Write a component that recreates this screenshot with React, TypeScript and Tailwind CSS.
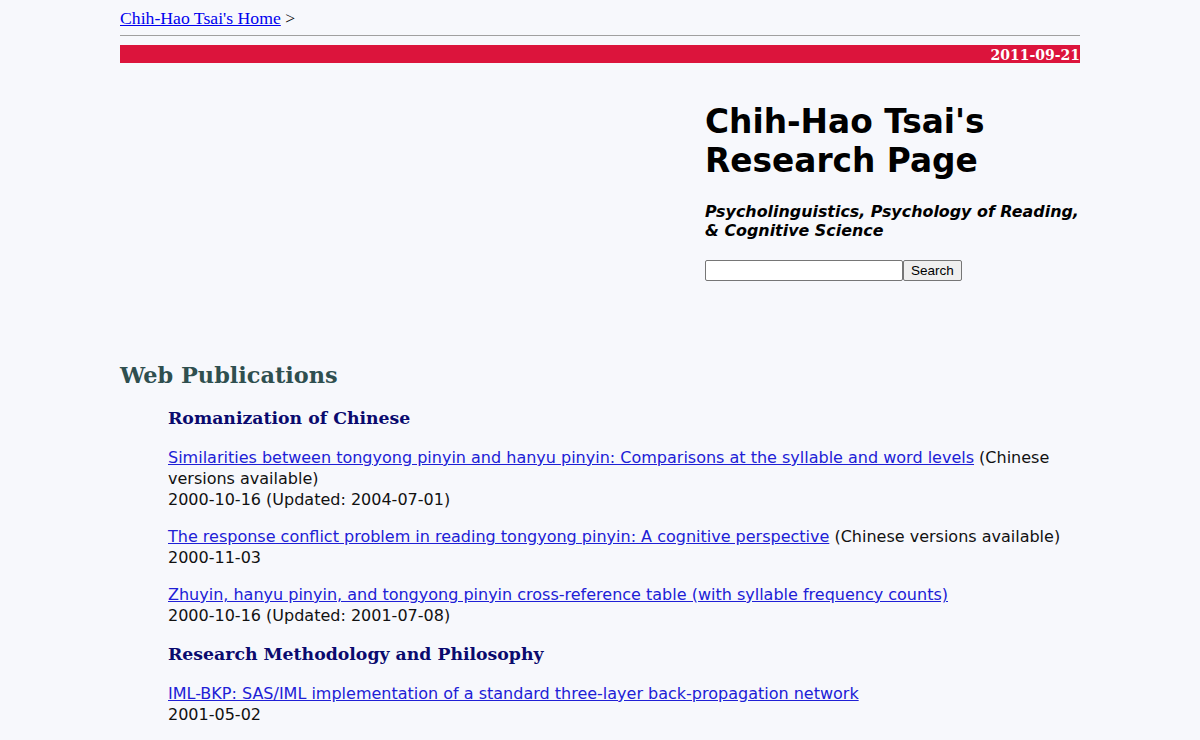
import React from 'react';

const verdana = "font-['Verdana','DejaVu_Sans',sans-serif]";

type Pub = { title: string; note?: string; date: string };

const romanization: Pub[] = [
  {
    title: 'Similarities between tongyong pinyin and hanyu pinyin: Comparisons at the syllable and word levels',
    note: '(Chinese versions available)',
    date: '2000-10-16 (Updated: 2004-07-01)',
  },
  {
    title: 'The response conflict problem in reading tongyong pinyin: A cognitive perspective',
    note: '(Chinese versions available)',
    date: '2000-11-03',
  },
  {
    title: 'Zhuyin, hanyu pinyin, and tongyong pinyin cross-reference table (with syllable frequency counts)',
    date: '2000-10-16 (Updated: 2001-07-08)',
  },
];

const methodology: Pub[] = [
  {
    title: 'IML-BKP: SAS/IML implementation of a standard three-layer back-propagation network',
    date: '2001-05-02',
  },
];

function PubItem({ pub }: { pub: Pub }) {
  return (
    <p className="mb-4 text-[16px] leading-[21px] text-[#111]">
      <a href="#" className="text-[#2020d6] underline">
        {pub.title}
      </a>
      {pub.note ? ' ' + pub.note : ''}
      <br />
      {pub.date}
    </p>
  );
}

function Section({ title, pubs }: { title: string; pubs: Pub[] }) {
  return (
    <div>
      <h3 className="mb-[17px] font-['Georgia','DejaVu_Serif',serif] text-[17.3px] font-bold leading-[24px] text-[#0a0a6e]">
        {title}
      </h3>
      {pubs.map((p) => (
        <PubItem key={p.title} pub={p} />
      ))}
    </div>
  );
}

export default function App() {
  return (
    <div className="min-h-[740px] bg-[#f7f8fc]">
      <div className={`mx-auto w-[960px] pt-[8px] ${verdana}`}>
        {/* breadcrumb */}
        <div className="font-['Liberation_Serif',serif] text-[17.7px] leading-[20px] text-black">
          <a href="#" className="text-[#0000ee] underline">
            Chih-Hao Tsai's Home
          </a>{' '}
          &gt;
        </div>
        <div className="mt-[7px] h-px bg-[#a0a0a0]" />
        <div className="mt-[9px] flex h-[18px] items-center justify-end bg-[#dc143c] pt-[3px] font-['Georgia','DejaVu_Serif',serif] text-[14px] font-bold text-white">
          2011-09-21
        </div>

        {/* title block */}
        <div className="flex">
          <div className="w-[585px]" />
          <div className="flex-1 pt-[40px]">
            <h1 className="text-[32.8px] font-bold leading-[39px] text-black">
              Chih-Hao Tsai's
              <br />
              Research Page
            </h1>
            <p className="mt-[21px] whitespace-nowrap text-[15.9px] font-bold italic leading-[19px] text-black">
              Psycholinguistics, Psychology of Reading,
              <br />& Cognitive Science
            </p>
            <div className="mt-[20px] flex items-center">
              <input
                type="text"
                className="h-[21px] w-[198px] rounded-[2px] border border-[#767676] bg-white"
              />
              <button className="h-[21px] rounded-[2px] border border-[#767676] bg-[#efefef] px-[7px] font-['Liberation_Sans',sans-serif] text-[13.5px] leading-[19px] text-black">
                Search
              </button>
            </div>
          </div>
        </div>

        {/* publications */}
        <h2 className="mt-[79px] font-['Georgia','DejaVu_Serif',serif] text-[22.4px] font-bold leading-[30px] text-[#2f4f4f]">
          Web Publications
        </h2>
        <div className="mt-[16px] pl-[48px]">
          <Section title="Romanization of Chinese" pubs={romanization} />
          <Section title="Research Methodology and Philosophy" pubs={methodology} />
        </div>
      </div>
    </div>
  );
}
